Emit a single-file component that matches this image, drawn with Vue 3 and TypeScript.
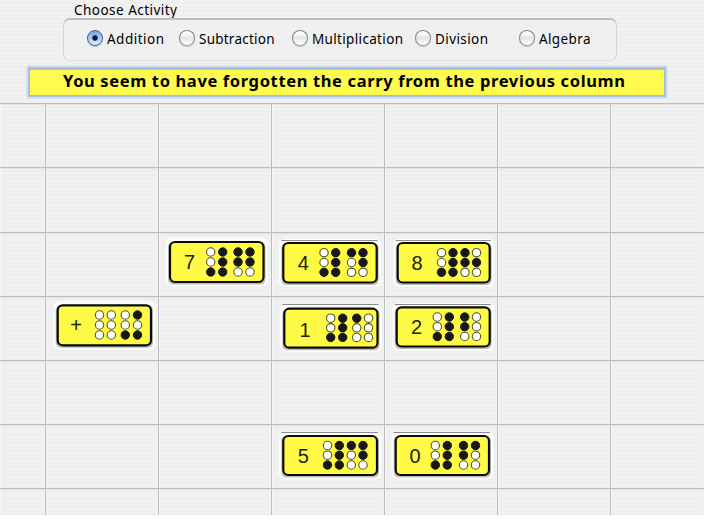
<script setup lang="ts">
import { ref } from 'vue'

interface Card {
  label: string
  row: number
  column: number
  x: number
  y: number
  width: number
  height: number
  labelX: number
  labelY: number
  dotXs: number[]
  dotYs: number[]
  // one string per row of dots, 1 = filled
  dots: string[]
  topLine: boolean
}

const activities = [
  { name: 'Addition', width: 57 },
  { name: 'Subtraction', width: 75.5 },
  { name: 'Multiplication', width: 91 },
  { name: 'Division', width: 53 },
  { name: 'Algebra', width: 51.5 },
]
const selected = ref('Addition')

const cards: Card[] = [
  { label: '7', row: 2, column: 2, x: 10, y: 8, width: 95.5, height: 42, labelX: 30.5, labelY: 36, dotXs: [51.7, 63.7, 79, 91], dotYs: [19, 29, 39], dots: ['0111', '0111', '1100'], topLine: false },
  { label: '4', row: 2, column: 3, x: 10.3, y: 9, width: 95.4, height: 41.5, labelX: 31.3, labelY: 37, dotXs: [52, 63.7, 79.5, 91], dotYs: [19.7, 29.5, 39.3], dots: ['0111', '0101', '1100'], topLine: true },
  { label: '8', row: 2, column: 4, x: 11.7, y: 9, width: 94, height: 41.5, labelX: 32, labelY: 37, dotXs: [56.5, 68, 80, 91.5], dotYs: [19.7, 29.5, 39.3], dots: ['0110', '0111', '1100'], topLine: true },
  { label: '+', row: 3, column: 1, x: 10.7, y: 7.3, width: 95.3, height: 42, labelX: 30, labelY: 34.5, dotXs: [53.5, 65.3, 79.3, 91.5], dotYs: [18, 28, 38], dots: ['0001', '0000', '0011'], topLine: false },
  { label: '1', row: 3, column: 3, x: 11.3, y: 10.7, width: 95.2, height: 41, labelX: 33, labelY: 40, dotXs: [58.7, 70.7, 84.7, 96.5], dotYs: [21.2, 30.8, 40.4], dots: ['0110', '0100', '1100'], topLine: true },
  { label: '2', row: 3, column: 4, x: 10.7, y: 9.3, width: 95, height: 41.2, labelX: 31.5, labelY: 37, dotXs: [52.3, 64.3, 79.7, 91.5], dotYs: [20, 29.7, 39.5], dots: ['0110', '0110', '1100'], topLine: true },
  { label: '5', row: 5, column: 3, x: 10.3, y: 10, width: 95.7, height: 41, labelX: 31.3, labelY: 38, dotXs: [55.5, 67.3, 79.3, 91], dotYs: [20.5, 30.2, 40], dots: ['0111', '0101', '1100'], topLine: true },
  { label: '0', row: 5, column: 4, x: 9.7, y: 10, width: 95.3, height: 41, labelX: 30, labelY: 37.5, dotXs: [50.3, 62.3, 78.5, 90.5], dotYs: [20.5, 30.2, 40], dots: ['0111', '0110', '1100'], topLine: true },
]

const cells = Array.from({ length: 49 }, (_, i) => {
  const row = Math.floor(i / 7)
  const column = i % 7
  return { key: i, card: cards.find((c) => c.row === row && c.column === column) }
})
</script>

<template>
  <main class="window">
    <header class="top">
      <svg class="caption" width="106" height="18">
        <text x="1" y="15" textLength="103">Choose Activity</text>
      </svg>
      <div class="group" role="radiogroup">
        <label v-for="a in activities" :key="a.name" class="option" @click="selected = a.name">
          <span class="radio" :class="{ on: selected === a.name }"></span>
          <svg class="name" :width="a.width + 2" height="20">
            <text x="0" y="15" :textLength="a.width">{{ a.name }}</text>
          </svg>
        </label>
      </div>
      <div class="message">
        <svg width="634" height="26">
          <text x="33" y="18" textLength="562">You seem to have forgotten the carry from the previous column</text>
        </svg>
      </div>
    </header>
    <section class="grid">
      <div v-for="cell in cells" :key="cell.key" class="cell">
        <svg v-if="cell.card" class="card" width="112" height="63">
          <rect class="halo" :x="cell.card.x - 3.5" :y="cell.card.y - 3.5" :width="cell.card.width + 7" :height="cell.card.height + 7" rx="6" />
          <rect class="shade" :x="cell.card.x - 1" :y="cell.card.y + 1" :width="cell.card.width + 2" :height="cell.card.height + 0.5" rx="5" />
          <path v-if="cell.card.topLine" class="edge" :d="`M${cell.card.x - 1} 7.5H${cell.card.x + cell.card.width}`" />
          <rect class="face" :x="cell.card.x + 1" :y="cell.card.y + 1" :width="cell.card.width - 2" :height="cell.card.height - 2" rx="5" />
          <text class="label" :x="cell.card.labelX" :y="cell.card.labelY">{{ cell.card.label }}</text>
          <template v-for="(line, r) in cell.card.dots" :key="r">
            <circle
              v-for="(dot, c) in line.split('')"
              :key="c"
              :class="dot === '1' ? 'filled' : 'open'"
              :cx="cell.card.dotXs[c]"
              :cy="cell.card.dotYs[r]"
              r="4.2"
            />
          </template>
        </svg>
      </div>
    </section>
  </main>
</template>

<style>
body {
  background: #fff;
}
</style>

<style scoped>
.window {
  width: 704px;
  height: 515px;
  overflow: hidden;
  background: repeating-linear-gradient(#f1f1f1 0 2px, #eeeeee 2px 4px);
  font-family: 'Noto Sans', 'Open Sans', sans-serif;
  color: #000;
}
.top {
  box-sizing: border-box;
  height: 103px;
}
svg {
  display: block;
}
.caption {
  margin-left: 73px;
  font-size: 13.5px;
}
.group {
  box-sizing: border-box;
  width: 554px;
  height: 43px;
  margin-left: 63px;
  padding: 10px 0 0 23px;
  display: grid;
  grid-template-columns: 92px 113px 123px 104px 90px;
  border: 1px solid #d2d2d2;
  border-top: 2px solid #bdbdbd;
  border-bottom-color: #e0e0e0;
  border-radius: 7px;
  background: rgba(240, 240, 240, 0.4);
}
.option {
  display: flex;
  align-items: flex-start;
  gap: 4px;
  height: 20px;
}
.name {
  margin-top: -1px;
  font-size: 13.5px;
}
.radio {
  box-sizing: border-box;
  width: 16px;
  height: 16px;
  border: 1px solid #858585;
  border-bottom-color: #a0a0a0;
  border-radius: 50%;
  background: linear-gradient(#fff 10%, #e5e5e5 50%, #fff);
  box-shadow: 0 1px 1px rgba(0, 0, 0, 0.2);
}
.radio.on {
  border-color: #4455a0;
  background: radial-gradient(circle at 50% 50%, #101838 0 2.3px, transparent 3.2px),
    linear-gradient(#7f9fdc, #a7cdf5 50%, #d8f6ff);
}
.message {
  width: 634px;
  height: 26px;
  margin: 8px 0 0 30px;
  background: #fffa4e;
  box-shadow: 0 0 0 1px #a5bdd8, 0 0 0 2px #aac5e5, 0 0 2px 3px #bed1e7, inset 0 1px 0 #c7cd82;
  font-size: 16.5px;
  font-weight: 700;
}
.grid {
  border-top: 1px solid #bdbdbd;
  display: grid;
  grid-template-columns: 46px repeat(5, 113px) 93px;
  grid-template-rows: 64px 65px repeat(5, 64px);
}
.cell {
  border-right: 1px solid #bdbdbd;
  border-bottom: 1px solid #bdbdbd;
  box-shadow: inset 1px 0 0 #f5f5f5, inset -1px 0 0 #f2f2f2, inset 0 1px 0 #e2e2e2;
  min-width: 0;
}
.cell:nth-child(7n) {
  border-right: 0;
}
.halo {
  fill: #fbfbfb;
}
.shade {
  fill: #bdbdbd;
}
.edge {
  stroke: #8c8c8c;
  stroke-width: 1;
}
.face {
  fill: #fffa45;
  stroke: #0b0b0b;
  stroke-width: 2.2;
}
.label {
  font: 20px 'Liberation Sans', Arial, sans-serif;
  text-anchor: middle;
  fill: #222208;
}
.filled {
  fill: #181818;
  stroke: #181818;
  stroke-width: 1;
}
.open {
  fill: #fff;
  stroke: #555530;
  stroke-width: 1.1;
}
</style>
